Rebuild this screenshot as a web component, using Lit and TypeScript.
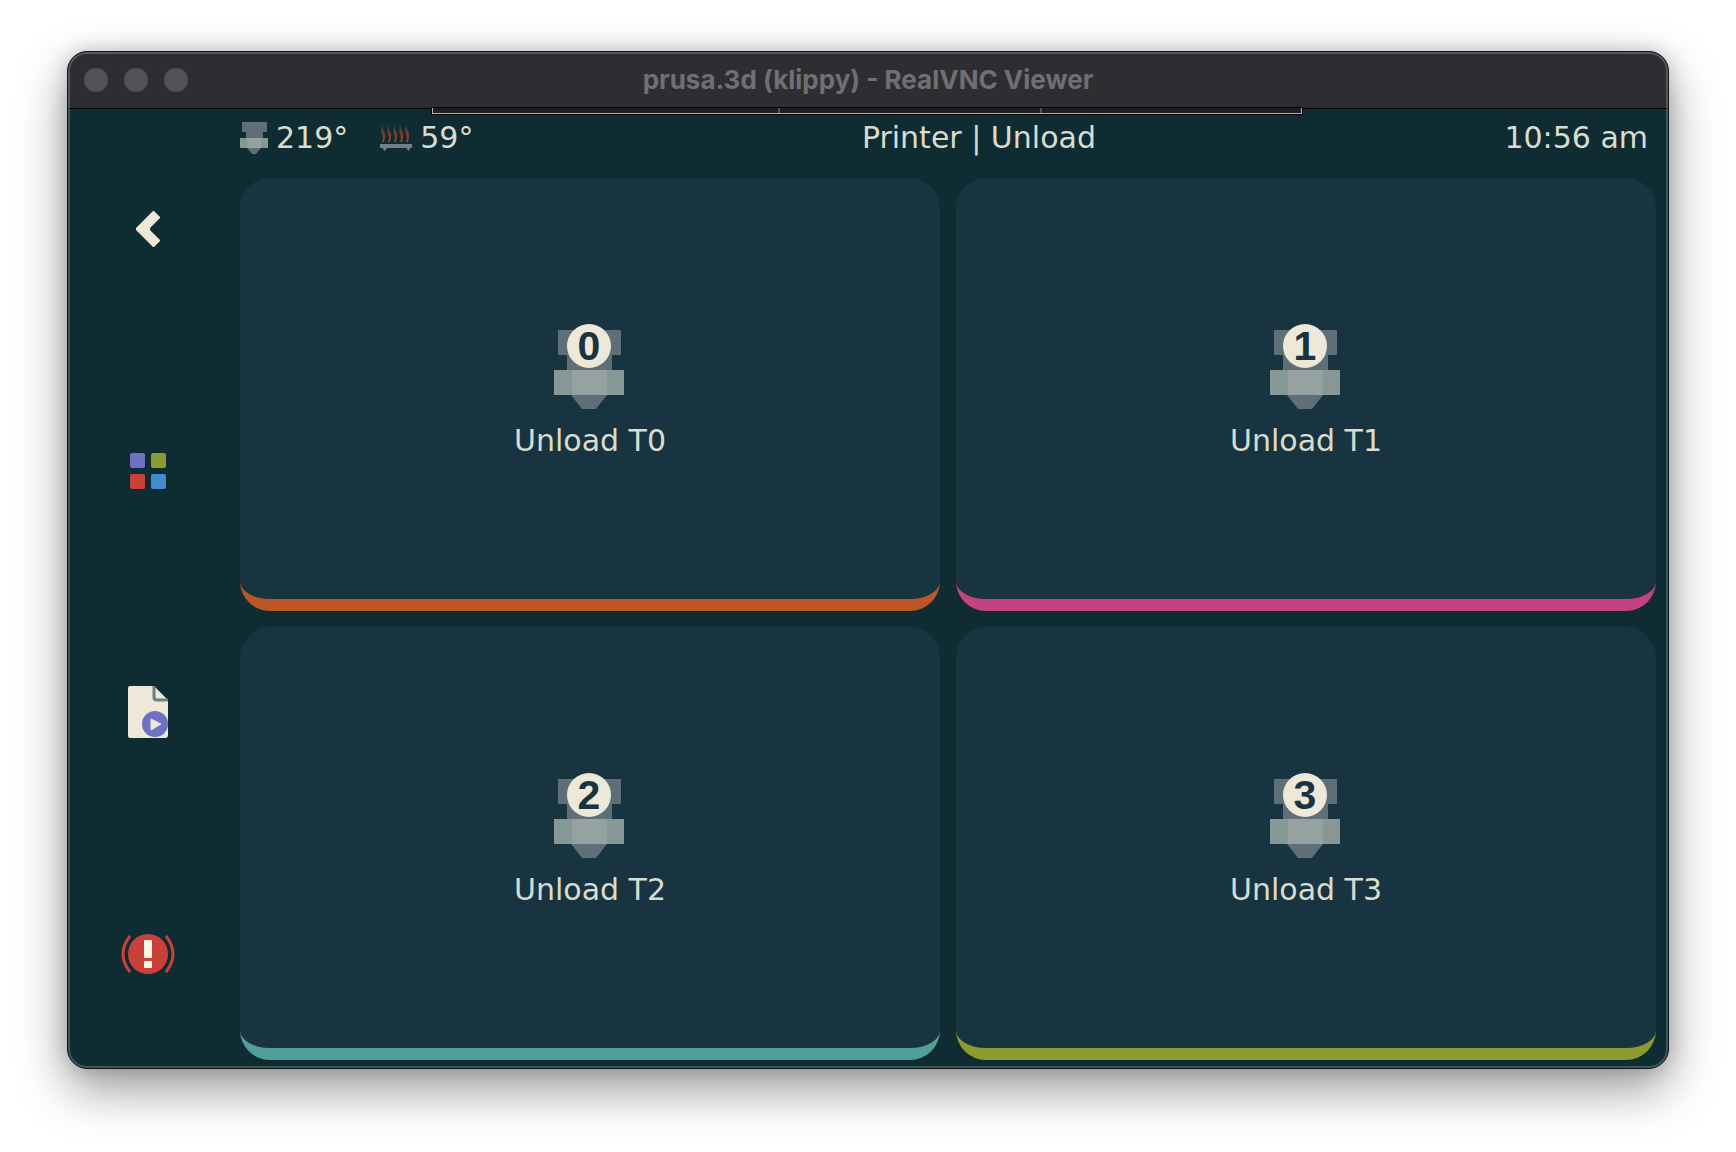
import { LitElement, html, css, svg } from "lit";
import { customElement, property } from "lit/decorators.js";

interface Tool {
  id: number;
  tone: string;
}

const TOOLS: Tool[] = [
  { id: 0, tone: "orange" },
  { id: 1, tone: "pink" },
  { id: 2, tone: "teal" },
  { id: 3, tone: "olive" },
];

const backIcon = svg`<svg width="26" height="38" viewBox="0 0 26 38" aria-hidden="true">
  <path d="M19 1 L25 7 V8 L15 18 V20 L25 30 V31 L19 37 H18 L1 20 V18 L18 1Z" fill="#eee8d9"/></svg>`;

const menuIcon = svg`<svg width="38" height="38" viewBox="0 0 38 38" aria-hidden="true">
  <rect x="1" y="1" width="15" height="15" rx="2" fill="#6f71c3"/>
  <rect x="22" y="1" width="15" height="15" rx="2" fill="#8b9b2d"/>
  <rect x="1" y="22" width="15" height="15" rx="2" fill="#cc403a"/>
  <rect x="22" y="22" width="15" height="15" rx="2" fill="#448ad0"/></svg>`;

const fileIcon = svg`<svg width="42" height="54" viewBox="0 0 42 54" aria-hidden="true">
  <path d="M3 1 H27 L41 15 V50 Q41 53 38 53 H3 Q1 53 1 51 V3 Q1 1 3 1Z" fill="#eee8d9"/>
  <path d="M27 1 V12 Q27 15 30 15 H41" fill="none" stroke="#6a817d" stroke-width="3"/>
  <path d="M27 1 L41 15" stroke="#6a817d" stroke-width="1"/>
  <circle cx="28" cy="39" r="13" fill="#6f71c3"/>
  <path d="M24 34 L34 39 L24 45Z" fill="#eee8d9" stroke="#eee8d9" stroke-linejoin="round"/></svg>`;

const stopIcon = svg`<svg width="54" height="42" viewBox="0 0 54 42" aria-hidden="true">
  <circle cx="27" cy="21" r="20" fill="#cc403a"/>
  <path d="M9 3 Q-5 21 9 39 M45 3 Q59 21 45 39" fill="none" stroke="#cc403a" stroke-width="3"/>
  <rect x="23" y="7" width="8" height="18" fill="#fdf6e3"/>
  <rect x="23" y="28" width="8" height="7" fill="#fdf6e3"/></svg>`;

const nozzleIcon = svg`<svg width="28" height="32" viewBox="0 0 28 32" aria-hidden="true">
  <path d="M2 0 H27 V10 H23 V16 H6 V10 H2Z" fill="#5f6f77"/>
  <path d="M7 26 H21 L16 32 H12Z" fill="#5f6f77"/>
  <rect y="16" width="28" height="10" fill="#869896"/>
  <rect x="7" y="16" width="14" height="10" fill="#96a2a2"/></svg>`;

const bedIcon = svg`<svg width="32" height="26" viewBox="0 0 32 26" aria-hidden="true">
  <defs><linearGradient id="heat" x1="0" y1="0" x2="0" y2="1">
    <stop offset="0" stop-color="#2b4a30"/><stop offset=".5" stop-color="#743b2c"/><stop offset="1" stop-color="#b23c30"/>
  </linearGradient></defs>
  ${[3, 9, 15, 21, 27].map(
    (x) => svg`<path d="M${x} 0 q-1 3 1 6 q2 3 1 6 l-1 5 h-2 q2 -4 0 -8 q-2 -5 1 -9Z" fill="url(#heat)"/>`
  )}
  <path d="M0 19 H32 V23 H30 L29 26 L26 23 H7 L5 26 L2 23 H0Z" fill="#6f7f88"/></svg>`;

@customElement("tool-card")
class ToolCard extends LitElement {
  @property({ type: Number }) tool = 0;
  @property() tone = "orange";

  static styles = css`
    :host {
      display: flex;
    }
    .card {
      flex: 1;
      display: flex;
      flex-direction: column;
      align-items: center;
      justify-content: center;
      gap: 12px;
      margin: 0;
      padding: 4px 0 0;
      border: 0 solid;
      border-bottom-width: 12px;
      border-radius: 30px;
      background: #183440;
      font: 30px/36px "DejaVu Sans", sans-serif;
      color: #d9dccf;
    }
    .orange { border-color: #bc5628; }
    .pink { border-color: #c4427f; }
    .teal { border-color: #519f99; }
    .olive { border-color: #8b9b2d; }
    .digit {
      font: bold 41px "Liberation Sans", sans-serif;
      text-anchor: middle;
      fill: #183440;
    }
  `;

  render() {
    return html`<button class="card ${this.tone}">
      <svg width="72" height="88" viewBox="1 0 72 88" aria-hidden="true">
        <path d="M5 7 H68 V32 H59 V47 H14 V32 H5Z" fill="#5f6f77" />
        <path d="M18 72 H54 L43 86 H29Z" fill="#5f6f77" />
        <rect x="1" y="47" width="70" height="25" fill="#869896" />
        <rect x="19" y="47" width="35" height="25" fill="#96a2a2" />
        <circle cx="36" cy="23" r="22" fill="#eee8d9" />
        <text class="digit" x="36" y="37">${this.tool}</text>
      </svg>
      <span>Unload T${this.tool}</span>
    </button>`;
  }
}

@customElement("app-root")
class AppRoot extends LitElement {
  static styles = css`
    :host {
      box-sizing: border-box;
      min-height: 100vh;
      padding: 51px 67px 83px;
      background: #fff;
      font-family: "DejaVu Sans", sans-serif;
    }
    :host,
    .window {
      display: flex;
      flex-direction: column;
    }
    .window {
      flex: 1;
      position: relative;
      overflow: hidden;
      border: 1px solid #0c1518;
      border-radius: 20px;
      background: #102c33;
    }
    .shade {
      flex: 1;
      display: flex;
      flex-direction: column;
      border-radius: 20px;
      box-shadow: 0 20px 50px rgba(0, 0, 0, 0.4), 0 0 20px rgba(0, 0, 0, 0.18);
    }
    .window::after {
      content: "";
      position: absolute;
      inset: 0;
      border: 2px solid rgba(255, 255, 255, 0.2);
      border-radius: 19px;
      pointer-events: none;
    }
    .titlebar {
      display: grid;
      grid-template-columns: 1fr auto 1fr;
      align-items: center;
      height: 56px;
      padding: 0 16px;
      border-bottom: 1px solid #000;
      background: #2e2e32;
    }
    .lights {
      display: flex;
      gap: 16px;
    }
    .light {
      width: 24px;
      height: 24px;
      padding: 0;
      border: 0;
      border-radius: 50%;
      background: #535357;
    }
    .title {
      margin: 0;
      font: 700 26px/32px Inter, sans-serif;
      color: #707074;
    }
    .handle {
      position: absolute;
      top: 56px;
      left: 50%;
      width: 870px;
      height: 6px;
      margin-left: -436px;
      display: grid;
      grid-template-columns: 346fr 262fr 262fr;
      box-sizing: border-box;
      border: 1px solid #b4b4b4;
      border-top: 0;
      outline: 1px solid #000;
      background: #1e1e1e;
    }
    .handle span + span {
      border-left: 2px solid #555;
    }
    .screen {
      flex: 1;
      display: grid;
      grid-template-columns: 160px 1fr;
    }
    .sidebar {
      display: grid;
      grid-template-rows: repeat(4, 1fr);
      gap: 14px;
      padding-top: 6px;
    }
    .nav {
      display: grid;
      place-items: center;
      padding: 0;
      border: 0;
      background: none;
    }
    .main {
      display: flex;
      flex-direction: column;
      padding: 0 12px 8px;
    }
    .status {
      display: grid;
      grid-template-columns: auto 1fr auto;
      align-items: center;
      height: 57px;
      padding: 0 8px 12px 0;
      font-size: 30px;
      line-height: 36px;
      color: #d9dccf;
    }
    .temps {
      display: flex;
      gap: 32px;
    }
    .temp {
      display: flex;
      align-items: center;
      gap: 8px;
    }
    .heading {
      text-align: center;
    }
    .clock {
      padding-left: 20px;
    }
    .cards {
      flex: 1;
      display: grid;
      grid-template: 1fr 1fr / 1fr 1fr;
      gap: 16px;
    }
  `;

  render() {
    return html`<div class="shade">
      <div class="window">
        <header class="titlebar">
          <div class="lights">
            <button class="light" aria-label="Close"></button>
            <button class="light" aria-label="Minimize"></button>
            <button class="light" aria-label="Zoom"></button>
          </div>
          <h1 class="title">prusa.3d (klippy) - RealVNC Viewer</h1>
        </header>
        <div class="handle"><span></span><span></span><span></span></div>
        <div class="screen">
          <nav class="sidebar">
            <button class="nav" aria-label="Back">${backIcon}</button>
            <button class="nav" aria-label="Main menu">${menuIcon}</button>
            <button class="nav" aria-label="Print files">${fileIcon}</button>
            <button class="nav" aria-label="Emergency stop">${stopIcon}</button>
          </nav>
          <main class="main">
            <div class="status">
              <div class="temps">
                <span class="temp">${nozzleIcon}<span>219°</span></span>
                <span class="temp">${bedIcon}<span>59°</span></span>
              </div>
              <span class="heading">Printer | Unload</span>
              <time class="clock">10:56 am</time>
            </div>
            <div class="cards">
              ${TOOLS.map((t) => html`<tool-card .tool=${t.id} .tone=${t.tone}></tool-card>`)}
            </div>
          </main>
        </div>
      </div>
    </div>`;
  }
}
